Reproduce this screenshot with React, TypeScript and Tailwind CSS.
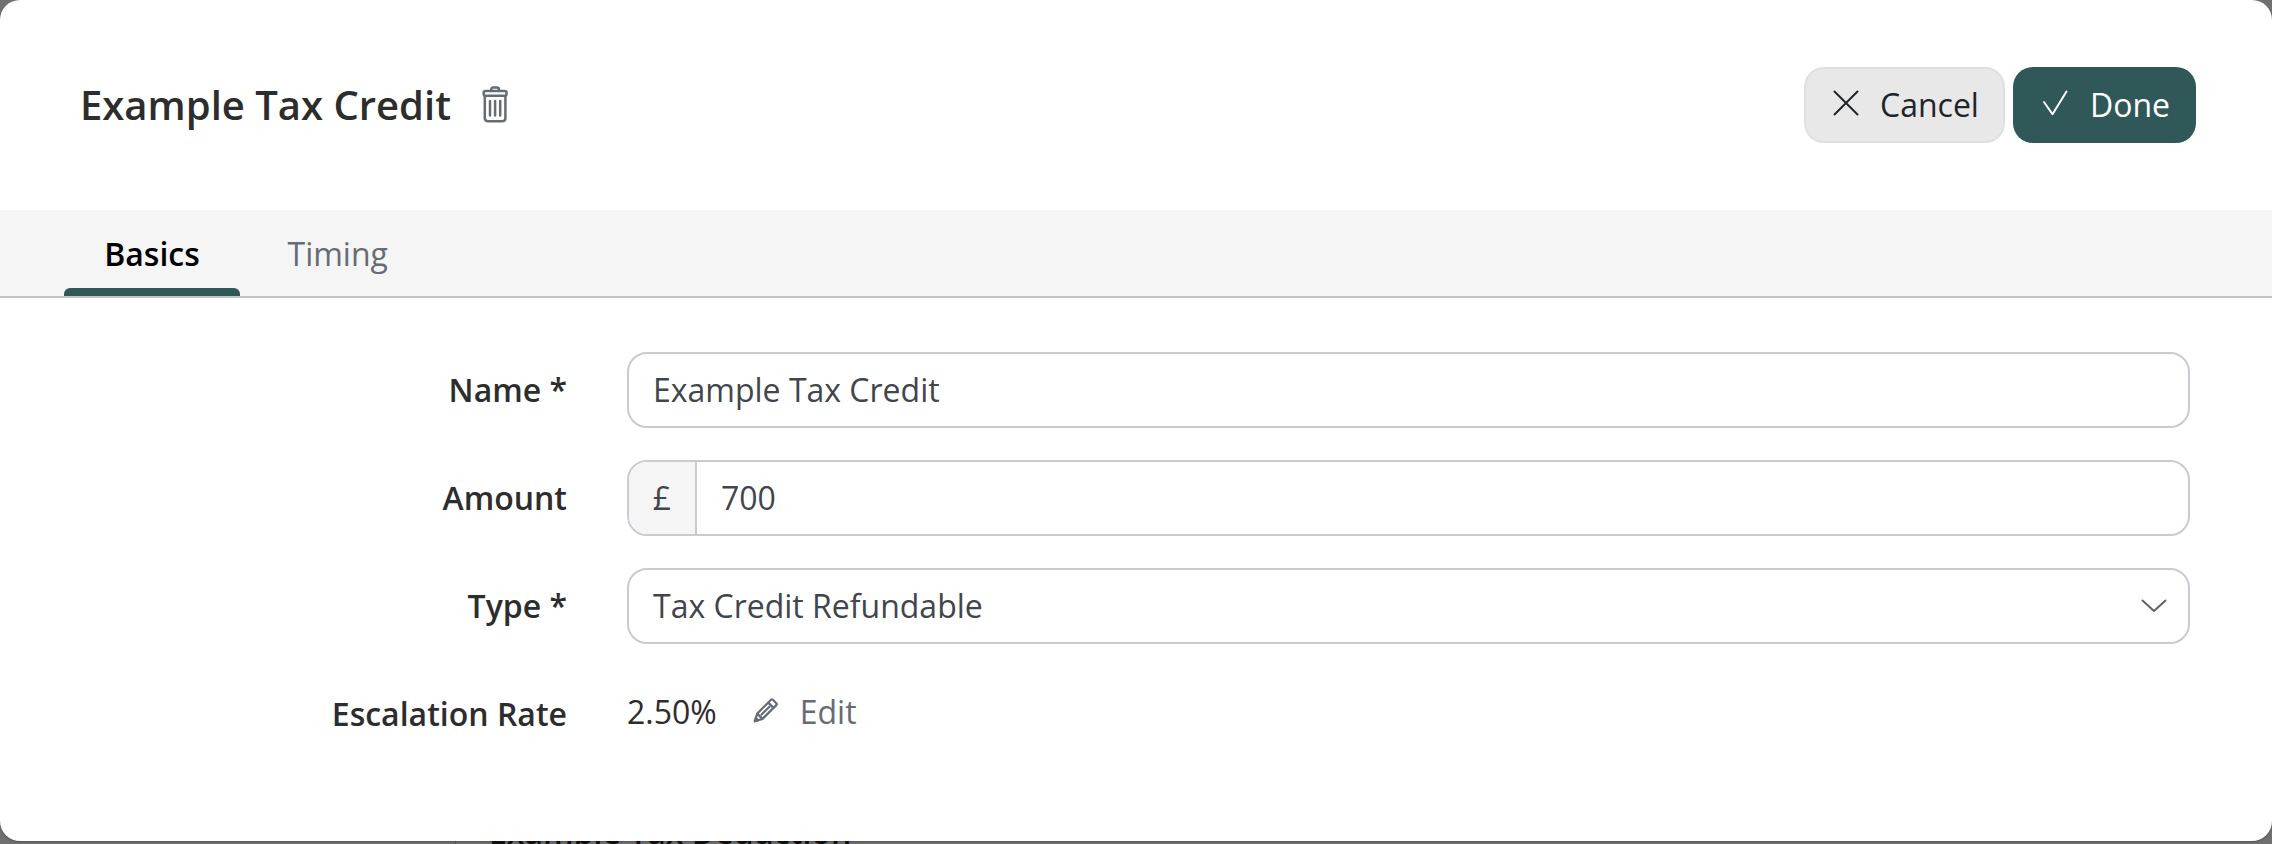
import React from "react";

const inputBox =
  "flex h-[76px] w-[1563px] items-center overflow-hidden rounded-[20px] border-2 border-[#c8ccd2] text-[32px] text-[#41464d]";

function TrashIcon() {
  return (
    <svg width="26" height="38" viewBox="0 0 26 38" fill="none" stroke="#666c76" strokeWidth="2.5" className="mt-[-3px] ml-[-1px]">
      <rect x="1.7" y="5.9" width="22.8" height="4.8" rx="1.6" />
      <path d="M9.3 6V4.4C9.3 3.2 10.1 2.4 11.3 2.4H14.9C16.1 2.4 16.9 3.2 16.9 4.4V6" />
      <path d="M2.8 11V33C2.8 35 4 36.2 6 36.2H20.2C22.2 36.2 23.4 35 23.4 33V11" />
      <path d="M8 16V30.5M13.1 16V30.5M18.2 16V30.5" strokeLinecap="round" />
    </svg>
  );
}

function PencilIcon() {
  return (
    <svg width="26" height="26" viewBox="0 0 26 26" fill="none" stroke="#666c76" strokeWidth="2.2" strokeLinejoin="round">
      <path d="M1.8 24.3L4.2 16.6L18 2.8C18.7 2.1 19.2 2.1 19.9 2.8L23.3 6.2C24 6.9 24 7.4 23.3 8.1L9.5 21.9Z" />
      <path d="M4.2 16.6L9.5 21.9M15.2 5.6L20.5 10.9" />
      <path d="M8.6 17.5L16.4 9.7" strokeLinecap="round" />
      <path d="M1.8 24.3L2.8 21L5.1 23.3Z" fill="#666c76" />
    </svg>
  );
}

function Row({ label, children }: { label: string; children: React.ReactNode }) {
  return (
    <div className="flex h-[76px] items-center gap-[60px]">
      <div className="w-[567px] text-right text-[32px] font-semibold text-[#2d2d2d]">{label}</div>
      {children}
    </div>
  );
}

export default function App() {
  return (
    <div className="relative h-[844px] w-[2272px] overflow-hidden bg-[#707070] font-['Open_Sans',sans-serif] leading-none">
      <div className="absolute top-[840px] left-[455px] h-1 w-px bg-[#555555]" />
      <div className="absolute top-[814px] left-[489px] text-[32px] leading-[36px] font-semibold whitespace-nowrap text-[#111111]">
        Example Tax Deduction
      </div>
      <main className="relative flex h-[841px] flex-col rounded-[20px] bg-white shadow-[0_1px_2px_rgba(0,0,0,0.25)]">
        <header className="flex h-[210px] items-center justify-between pr-[76px] pl-[80px]">
          <div className="flex items-center gap-[32px]">
            <h1 className="text-[40px] font-semibold text-[#2d2d2d]">Example Tax Credit</h1>
            <TrashIcon />
          </div>
          <div className="flex gap-2 text-[32px]">
            <button className="flex h-[76px] w-[201px] items-center gap-[21px] rounded-[20px] border-2 border-[#e0e0e0] bg-[#e8e8e8] pl-[27px] text-[#212529]">
              <svg width="26" height="26" viewBox="0 0 26 26" fill="none" stroke="currentColor" strokeWidth="2" strokeLinecap="round" className="mt-[-4px]">
                <path d="M1.5 1.5L24.5 24.5M24.5 1.5L1.5 24.5" />
              </svg>
              Cancel
            </button>
            <button className="flex h-[76px] w-[183px] items-center gap-[22px] rounded-[20px] bg-[#305858] pl-[29px] text-white">
              <svg width="26" height="26" viewBox="0 0 26 26" fill="none" stroke="currentColor" strokeWidth="2" strokeLinecap="round" strokeLinejoin="round" className="mt-[-4px]">
                <path d="M2 12L10.5 24.3L24.5 1.5" />
              </svg>
              Done
            </button>
          </div>
        </header>
        <nav className="flex h-[88px] border-b-2 border-[#c4c4c4] bg-[#f5f5f5] pl-16 text-[32px]">
          <div className="flex w-[176px] flex-col justify-between">
            <span className="pt-[28px] text-center font-semibold text-black">Basics</span>
            <span className="h-2 rounded-t-[6px] bg-[#305858]" />
          </div>
          <span className="pt-[28px] pl-[47.5px] text-[#666c76]">Timing</span>
        </nav>
        <section className="flex flex-col gap-8 pt-[54px]">
          <Row label="Name *">
            <div className={inputBox + " pl-6"}>Example Tax Credit</div>
          </Row>
          <Row label="Amount">
            <div className={inputBox}>
              <span className="flex h-full w-[68px] items-center justify-center border-r-2 border-[#c8ccd2] bg-[#f5f5f5]">£</span>
              <span className="pl-6">700</span>
            </div>
          </Row>
          <Row label="Type *">
            <div className={inputBox + " justify-between pr-[21px] pl-6"}>
              Tax Credit Refundable
              <svg width="26" height="16" viewBox="0 0 26 16" fill="none" stroke="#5d646d" strokeWidth="2" strokeLinecap="round" strokeLinejoin="round">
                <path d="M1.5 2.5L13 13L24.5 2.5" />
              </svg>
            </div>
          </Row>
          <Row label="Escalation Rate">
            <div className="mt-[-4px] flex items-center text-[32px]">
              <span className="text-[#2d2d2d]">2.50%</span>
              <span className="mt-[-4px] ml-[36px]"><PencilIcon /></span>
              <span className="ml-[21px] text-[#666c76]">Edit</span>
            </div>
          </Row>
        </section>
      </main>
    </div>
  );
}
